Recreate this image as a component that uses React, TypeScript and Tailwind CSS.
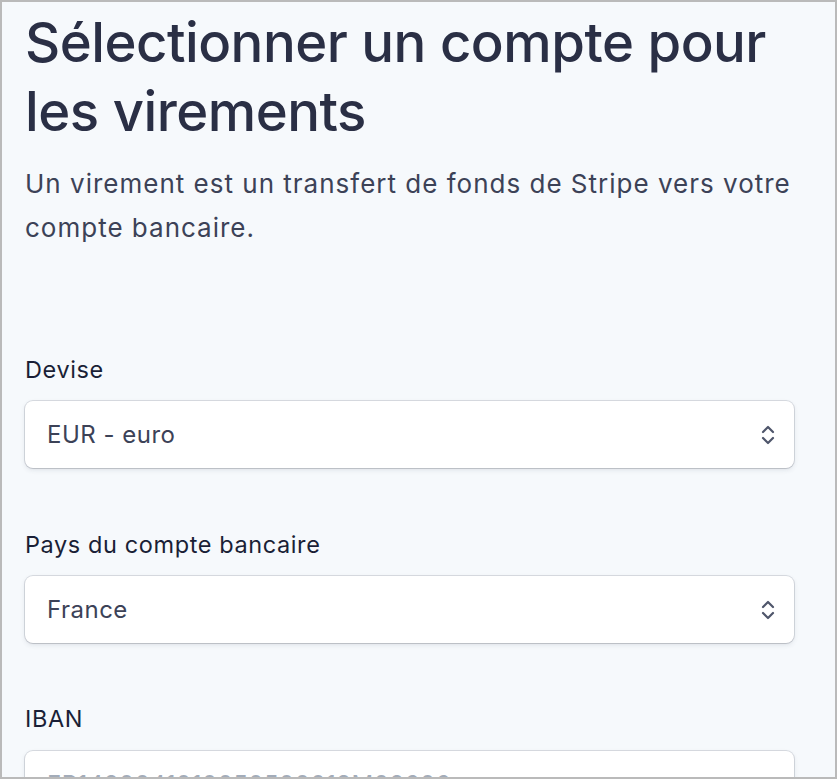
import React from "react";

function Chevrons() {
  return (
    <svg width="16" height="24" viewBox="0 0 16 24" fill="none" stroke="#4f566b" strokeWidth="2.2" strokeLinecap="round" strokeLinejoin="round">
      <path d="M3 9 L8 4 L13 9" />
      <path d="M3 15 L8 20 L13 15" />
    </svg>
  );
}

const boxShadow =
  "shadow-[0_0_0_1px_rgba(60,66,87,0.16),0_2px_5px_rgba(60,66,87,0.12),0_1px_1px_rgba(0,0,0,0.08)]";

function Select({ value }: { value: string }) {
  return (
    <div className={`flex items-center justify-between h-[67px] rounded-[8px] bg-white pl-[22px] pr-[18px] ${boxShadow}`}>
      <span className="text-[24px] tracking-[0.5px] text-[#3c4257]">{value}</span>
      <Chevrons />
    </div>
  );
}

export default function App() {
  return (
    <div className="w-[837px] h-[779px] border-2 border-[#bababa] bg-[#f6f9fc] overflow-hidden" style={{ fontFamily: "Inter, 'Noto Sans', sans-serif" }}>
      <div className="pl-[23px] pr-[41px] pt-[6px]">
        <h1 className="text-[54.5px] leading-[69px] font-medium text-[#2a2f45] tracking-[-0.5px]">
          Sélectionner un compte pour les virements
        </h1>
        <p className="mt-[16px] text-[26px] leading-[44px] tracking-[1px] text-[#3c4257]">
          Un virement est un transfert de fonds de Stripe vers votre compte bancaire.
        </p>
        <div className="mt-[105px] flex flex-col">
          <label className="text-[23.5px] leading-[30px] tracking-[0.6px] text-[#1a1f36]">Devise</label>
          <div className="mt-[16px]">
            <Select value="EUR - euro" />
          </div>
          <label className="mt-[62px] text-[23.5px] leading-[30px] tracking-[0.6px] text-[#1a1f36]">Pays du compte bancaire</label>
          <div className="mt-[16px]">
            <Select value="France" />
          </div>
          <label className="mt-[61px] text-[23.5px] leading-[30px] tracking-[0.6px] text-[#1a1f36]">IBAN</label>
          <div className="mt-[17px]">
            <div className={`flex items-center h-[67px] rounded-[8px] bg-white pl-[22px] ${boxShadow}`}>
              <span className="text-[24px] tracking-[0.5px] text-[#a3acb9]">FR1420041010050500013M02606</span>
            </div>
          </div>
        </div>
      </div>
    </div>
  );
}
